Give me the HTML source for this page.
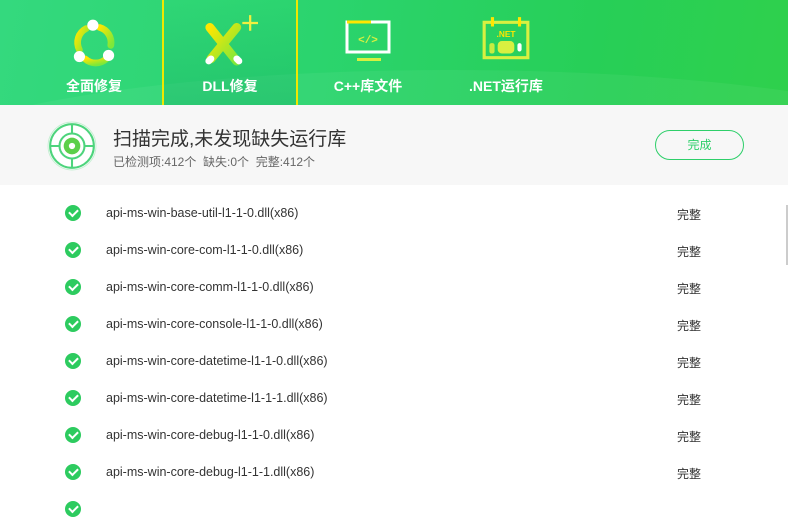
<!DOCTYPE html>
<html><head><meta charset="utf-8"><style>
*{margin:0;padding:0;box-sizing:border-box}
body{width:788px;height:509px;overflow:hidden;background:#fff;font-family:"Liberation Sans","Noto Sans CJK SC",sans-serif;position:relative}
.hdr{position:absolute;left:0;top:0;width:788px;height:105px;background:linear-gradient(100deg,#34d97e 0%,#2bd46e 40%,#27cf57 75%,#2fd04c 100%);overflow:hidden}
.wave{position:absolute;left:-100px;top:70px;width:1100px;height:200px;border-radius:50%;background:rgba(255,255,255,0.05)}
.tab{position:absolute;top:0;height:105px;width:136px;text-align:center;color:#fff;font-weight:bold;font-size:14px}
.tab .lbl{position:absolute;left:0;right:0;top:76px}
.tab svg{position:absolute;left:50%;top:14px;transform:translateX(-50%)}
.act{background:linear-gradient(180deg,rgba(20,170,100,0.0) 0%,rgba(20,170,100,0.35) 100%);border-left:2px solid #f0e800;border-right:2px solid #f0e800}
.panel{position:absolute;left:0;top:105px;width:788px;height:80px;background:#f7f7f7}
.t1{position:absolute;left:113px;top:124px;font-size:19px;color:#333}
.t2{position:absolute;left:113px;top:153px;font-size:12px;color:#666}
.btn{position:absolute;left:655px;top:130px;width:89px;height:30px;border:1px solid #2ecf6a;border-radius:15px;color:#2ecf6a;font-size:12px;text-align:center;line-height:28px}
.row{position:absolute;left:0;width:788px;height:20px;font-size:12.5px;color:#333}
.row .ck{position:absolute;left:65px;top:2px;width:16px;height:16px;border-radius:50%;background:#2dcb5f}
.row .ck:after{content:"";position:absolute;left:4px;top:4px;width:7px;height:4px;border-left:2px solid #fff;border-bottom:2px solid #fff;transform:rotate(-45deg)}
.row .n{position:absolute;left:106px;top:3px}
.row .s{position:absolute;left:677px;top:3px;font-size:12px}
.sb{position:absolute;left:786px;top:205px;width:2px;height:60px;background:#ccc}
</style></head><body>
<div class="hdr"><div class="wave"></div>
<div class="tab" style="left:26px">
<svg width="56" height="56" viewBox="0 0 50 50"><defs><linearGradient id="g1" x1="0" y1="0" x2="1" y2="1"><stop offset="0" stop-color="#ffe600"/><stop offset="1" stop-color="#7de83a"/></linearGradient></defs>
<path d="M12 32 A14 14 0 0 1 18 13" stroke="url(#g1)" stroke-width="6" fill="none" stroke-linecap="round"/>
<path d="M30 12 A14 14 0 0 1 40 28" stroke="url(#g1)" stroke-width="6" fill="none" stroke-linecap="round"/>
<path d="M36 40 A14 14 0 0 1 17 40" stroke="url(#g1)" stroke-width="6" fill="none" stroke-linecap="round"/>
<circle cx="24" cy="10" r="5" fill="#fff"/><circle cx="12" cy="38" r="5" fill="#fff"/><circle cx="38" cy="37" r="5" fill="#fff"/></svg>
<div class="lbl">全面修复</div></div>
<div class="tab act" style="left:162px">
<svg width="68" height="56" viewBox="0 0 60 50"><defs><linearGradient id="g2" x1="0" y1="0" x2="1" y2="1"><stop offset="0" stop-color="#ffe600"/><stop offset="1" stop-color="#7de83a"/></linearGradient></defs>
<path d="M12 12 L36 42" stroke="url(#g2)" stroke-width="8" stroke-linecap="round"/>
<path d="M36 12 L13 40" stroke="url(#g2)" stroke-width="8" stroke-linecap="round"/>
<path d="M36 40 L38 42 M13 40 L11 42" stroke="#fff" stroke-width="6" stroke-linecap="round"/>
<path d="M48 1 V15 M41 8 H55" stroke="#f0f040" stroke-width="2"/></svg>
<div class="lbl">DLL修复</div></div>
<div class="tab" style="left:300px">
<svg width="50" height="50" viewBox="0 0 50 50"><rect x="4" y="8" width="42" height="30" fill="none" stroke="#fff" stroke-width="3"/><path d="M4 8 H28" stroke="#ffe600" stroke-width="3"/>
<text x="25" y="29" font-size="11" fill="#d8f040" text-anchor="middle" font-family="Liberation Mono" font-weight="bold">&lt;/&gt;</text><rect x="14" y="44" width="24" height="3" fill="#d8f040"/></svg>
<div class="lbl">C++库文件</div></div>
<div class="tab" style="left:438px">
<svg width="52" height="52" viewBox="0 0 50 50"><rect x="4" y="8" width="42" height="34" fill="none" stroke="#d8f040" stroke-width="3"/><path d="M12 3 V12 M38 3 V12" stroke="#ffe600" stroke-width="3"/>
<text x="25" y="22" font-size="8" fill="#ffe600" text-anchor="middle">.NET</text><rect x="17" y="26" width="16" height="12" rx="4" fill="#d8f040"/><rect x="9" y="28" width="5" height="10" rx="2" fill="#c8ec40"/><rect x="36" y="28" width="4" height="8" rx="2" fill="#fff"/></svg>
<div class="lbl">.NET运行库</div></div>
</div>
<div class="panel"></div>
<svg style="position:absolute;left:46px;top:120px" width="52" height="52" viewBox="0 0 50 50"><circle cx="25" cy="25" r="23" fill="#fff" stroke="#c8efd4" stroke-width="1"/><circle cx="25" cy="25" r="21" fill="none" stroke="#4dd47c" stroke-width="2"/><circle cx="25" cy="25" r="12" fill="none" stroke="#4dd47c" stroke-width="2"/><path d="M25 4V13 M25 37V46 M4 25H13 M37 25H46" stroke="#4dd47c" stroke-width="2"/><circle cx="25" cy="25" r="8" fill="#5ccf4a"/><circle cx="25" cy="25" r="3" fill="#fff"/></svg>
<div class="t1">扫描完成,未发现缺失运行库</div>
<div class="t2">已检测项:412个&nbsp;&nbsp;缺失:0个&nbsp;&nbsp;完整:412个</div>
<div class="btn">完成</div>
<div class="sb"></div>
<div class="row" style="top:203px"><div class="ck"></div><div class="n">api-ms-win-base-util-l1-1-0.dll(x86)</div><div class="s">完整</div></div>
<div class="row" style="top:240px"><div class="ck"></div><div class="n">api-ms-win-core-com-l1-1-0.dll(x86)</div><div class="s">完整</div></div>
<div class="row" style="top:277px"><div class="ck"></div><div class="n">api-ms-win-core-comm-l1-1-0.dll(x86)</div><div class="s">完整</div></div>
<div class="row" style="top:314px"><div class="ck"></div><div class="n">api-ms-win-core-console-l1-1-0.dll(x86)</div><div class="s">完整</div></div>
<div class="row" style="top:351px"><div class="ck"></div><div class="n">api-ms-win-core-datetime-l1-1-0.dll(x86)</div><div class="s">完整</div></div>
<div class="row" style="top:388px"><div class="ck"></div><div class="n">api-ms-win-core-datetime-l1-1-1.dll(x86)</div><div class="s">完整</div></div>
<div class="row" style="top:425px"><div class="ck"></div><div class="n">api-ms-win-core-debug-l1-1-0.dll(x86)</div><div class="s">完整</div></div>
<div class="row" style="top:462px"><div class="ck"></div><div class="n">api-ms-win-core-debug-l1-1-1.dll(x86)</div><div class="s">完整</div></div>
<div class="row" style="top:499px"><div class="ck"></div></div>
</body></html>
